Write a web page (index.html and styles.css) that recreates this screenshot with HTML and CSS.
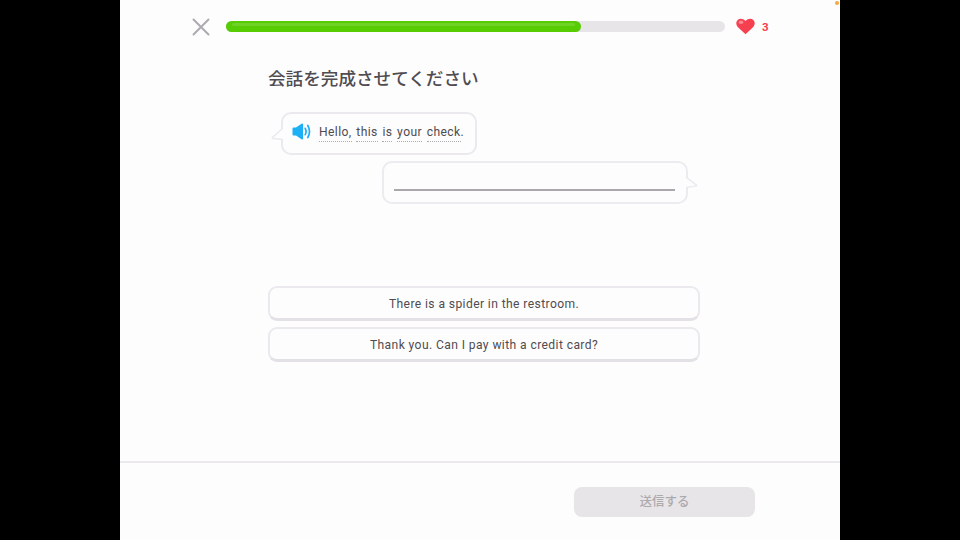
FILE: index.html
```html
<!DOCTYPE html>
<html lang="ja">
<head>
<meta charset="utf-8">
<title>会話を完成させてください</title>
<link rel="stylesheet" href="styles.css">
</head>
<body>
<div class="screen">
  <span class="status-dot"></span>
  <header class="top">
    <svg class="close" width="18" height="18" viewBox="0 0 18 18"><path d="M1.500 1.500 16.500 16.500M16.500 1.500 1.500 16.500" fill="none" stroke="#aeaab0" stroke-width="2" stroke-linecap="round"/></svg>
    <div class="track"><div class="fill" style="width:71.200%"><span class="shine"></span></div></div>
    <svg class="heart" width="19" height="17" viewBox="0 0 19 17"><path d="M9.500 16.300 2 9.200C-.2 7-.2 3.600 1.700 1.900 3.700.2 7 .4 9.500 3 12 .4 15.300.2 17.300 1.900 19.200 3.600 19.200 7 17 9.200Z" fill="#f6404f"/><ellipse cx="5" cy="4.300" rx="2.300" ry="1.700" fill="#fb8a92"/></svg>
    <span class="lives">3</span>
  </header>
  <main class="content">
    <h1 class="title">会話を完成させてください</h1>
    <div class="bubble prompt">
      <svg class="tail tail-left" width="13" height="13" viewBox="0 0 13 13"><path d="M12 0 1.500 9.500Q1 10.500 2 10.500L12 11.500" fill="#fefdfe" stroke="#ebe9ed" stroke-width="1.600"/></svg>
      <svg class="speaker" width="20" height="17" viewBox="0 0 20 17"><path d="M0.500 5.500Q0.500 4.500 1.500 4.500H4L9.500.8Q11 0 11 1.500V15.500Q11 17 9.500 16.200L4 12.500H1.500Q.5 12.500.5 11.500Z" fill="#1cb0f6"/><path d="M13.200 5.300Q15 8.500 13.200 11.700M15.800 2.500Q19.200 8.500 15.800 14.500" fill="none" stroke="#1cb0f6" stroke-width="1.700" stroke-linecap="round"/></svg>
      <p class="line"><span class="word">Hello,</span> <span class="word">this</span> <span class="word">is</span> <span class="word">your</span> <span class="word">check</span>.</p>
    </div>
    <div class="bubble answer">
      <svg class="tail tail-right" width="13" height="13" viewBox="0 0 13 13"><path d="M1 0 11.500 8Q12 9 11 9L1 10.500" fill="#fefdfe" stroke="#ecebef" stroke-width="1.600"/></svg>
      <div class="blank"></div>
    </div>
    <div class="choices">
      <button class="choice">There is a spider in the restroom.</button>
      <button class="choice">Thank you. Can I pay with a credit card?</button>
    </div>
  </main>
  <footer class="bottom">
    <button class="submit">送信する</button>
  </footer>
</div>
</body>
</html>
```
FILE: styles.css
```css
* { box-sizing: border-box; }
html, body { margin: 0; height: 100%; background: #000; }
body { display: flex; justify-content: center; overflow: hidden; }
.screen {
  position: relative;
  width: 720px;
  height: 540px;
  background: #fefdfe;
  display: flex;
  flex-direction: column;
  font-family: "Roboto", "Noto Sans CJK JP", sans-serif;
  color: #4b4b4b;
}
.status-dot {
  position: absolute;
  top: 1px;
  right: 1px;
  width: 4px;
  height: 4px;
  border-radius: 50%;
  background: #f5a742;
}
.top {
  display: flex;
  align-items: center;
  height: 53px;
  padding-left: 72px;
}
.close { margin-right: 16px; }
.track {
  width: 499px;
  height: 11px;
  border-radius: 6px;
  background: #e7e5e8;
  margin-right: 11px;
}
.fill {
  height: 100%;
  border-radius: 6px;
  background: #58cc02;
  padding: 2px 6px 0;
}
.shine {
  display: block;
  height: 3px;
  border-radius: 2px;
  background: #6fd226;
}
.lives {
  margin-left: 7px;
  font: 700 11.500px "Roboto", sans-serif;
  color: #f6404f;
}
.content {
  flex: 1;
  padding-left: 148px;
  display: flex;
  flex-direction: column;
  align-items: flex-start;
}
.title {
  margin: 12px 0 21px;
  font: 500 17.600px/26px "Noto Sans CJK JP", sans-serif;
  color: #504d52;
}
.bubble {
  position: relative;
  background: #fefdfe;
  border: 2px solid #ebe9ed;
  border-radius: 10px;
}
.tail { position: absolute; }
.tail-left { left: -12px; top: 14px; }
.tail-right { right: -12px; top: 14px; }
.prompt {
  margin-left: 13px;
  width: 196px;
  height: 43px;
  display: flex;
  align-items: center;
  padding: 0 0 3px 9px;
}
.speaker { margin: 0 7px 1px 0; flex: none; }
.line {
  margin: 0;
  font-size: 12.100px;
  letter-spacing: .4px;
  word-spacing: 1.300px;
  white-space: nowrap;
  color: #4f4c50;
}
.word {
  display: inline-block;
  line-height: 18px;
  border-bottom: 1px dotted #aeabb0;
}
.answer {
  margin: 6px 0 0 114px;
  width: 306px;
  height: 43px;
  padding: 26px 11px 0 10px;
  border-color: #ecebef;
}
.blank { height: 2px; background: #aaa8ac; }
.choices {
  margin-top: 82px;
  width: 432px;
  display: flex;
  flex-direction: column;
  gap: 6px;
}
.choice {
  height: 35px;
  background: #fefdfe;
  border: 2px solid #ebe9ed;
  border-bottom: 3px solid #e3e1e5;
  border-radius: 9px;
  font: 400 12.100px "Roboto", sans-serif;
  letter-spacing: .4px;
  color: #4f4c50;
  padding: 1px 0 0;
}
.bottom {
  height: 79px;
  border-top: 2px solid #ebe9ed;
  padding: 24px 85px 0 0;
  display: flex;
  justify-content: flex-end;
  align-items: flex-start;
}
.submit {
  width: 181px;
  height: 30px;
  border: 0;
  border-radius: 8px;
  background: #e7e5e8;
  color: #adaaae;
  font: 500 12.500px "Noto Sans CJK JP", sans-serif;
  padding: 0 0 3px;
}
```
